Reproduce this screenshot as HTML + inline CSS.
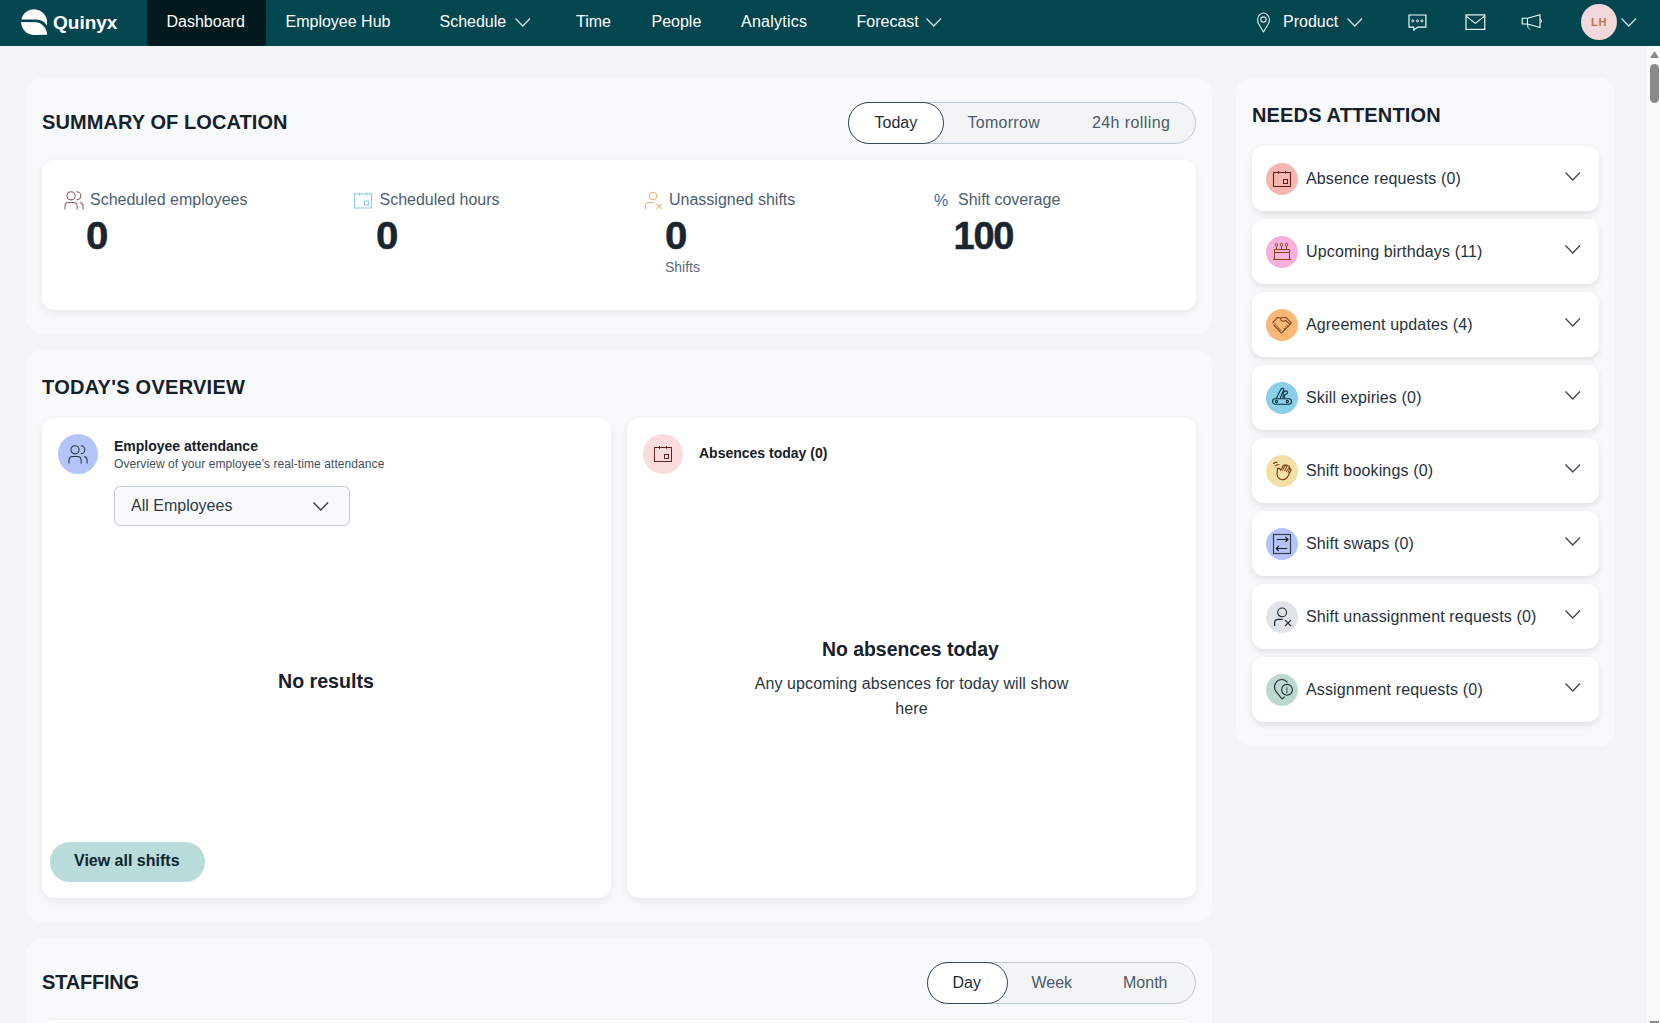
<!DOCTYPE html>
<html>
<head>
<meta charset="utf-8">
<style>
*{box-sizing:border-box;margin:0;padding:0}
html,body{width:1660px;height:1023px;overflow:hidden}
body{background:#f3f4f6;font-family:"Liberation Sans",sans-serif;position:relative;color:#1b2631}
.a{position:absolute;white-space:nowrap;line-height:1}
svg{position:absolute;overflow:visible}
#nav{position:absolute;left:0;top:0;width:1660px;height:46px;background:#024650}
#nav .t{color:#fff;font-size:16px;top:13.5px}
#tab{position:absolute;left:147px;top:0;width:119px;height:46px;background:#021a1e;border-radius:0 0 4px 4px}
.sec{position:absolute;background:#f8f9fb;border-radius:16px}
.card{position:absolute;background:#fff;border-radius:12px;box-shadow:0 3px 8px rgba(0,0,0,.07)}
.title{font-size:20px;font-weight:700;color:#17212b;letter-spacing:0}
.tog{position:absolute;height:42px;border:1px solid #bccad3;background:#f3f4f6;border-radius:21px}
.pill{position:absolute;height:42px;border:1px solid #34485a;background:#fff;border-radius:21px}
.tt{font-size:16px;color:#4a5b69}
.lbl{font-size:16px;color:#4d6070}
.num{font-size:38px;font-weight:700;color:#1a2530;-webkit-text-stroke:0.5px #1a2530}
.z{transform:scaleX(1.06);transform-origin:0 0}
.item{position:absolute;left:1252px;width:347px;height:65px;background:#fff;border-radius:12px;box-shadow:0 3px 7px rgba(0,0,0,.1)}
.item .c{position:absolute;left:14px;top:17px;width:32px;height:32px;border-radius:50%}
.item .l{position:absolute;left:54px;top:25px;font-size:16px;color:#27323d;white-space:nowrap;line-height:1;letter-spacing:0.15px}
.item svg.ch{left:313px;top:26px}
</style>
</head>
<body>
<!-- NAV -->
<div id="nav">
  <div id="tab"></div>
  <!-- logo -->
  <svg width="32" height="32" style="left:18px;top:6px" viewBox="0 0 32 32">
    <path d="M3.3 13.4 A13 13 0 1 1 28.8 19.4 C26.5 15.5 23 13.6 18 13.5 Z" fill="#fff"/>
    <path d="M3.1 16.1 L18 16.2 C23.5 16.4 28.7 21.5 29.2 28.8 L16.15 29 A13 13 0 0 1 3.1 16.1 Z" fill="#fff"/>
  </svg>
  <div class="a t" style="left:53px;top:13px;font-size:19px;font-weight:700">Quinyx</div>
  <div class="a t" style="left:166.5px">Dashboard</div>
  <div class="a t" style="left:285.5px">Employee Hub</div>
  <div class="a t" style="left:439.5px">Schedule</div>
  <svg width="16" height="9" style="left:515px;top:17.5px"><path d="M0.5 0.5 L7.75 8 L15 0.5" fill="none" stroke="#d8dfe2" stroke-width="1.3"/></svg>
  <div class="a t" style="left:576px">Time</div>
  <div class="a t" style="left:651.5px">People</div>
  <div class="a t" style="left:741px;letter-spacing:0.25px">Analytics</div>
  <div class="a t" style="left:856.5px">Forecast</div>
  <svg width="16" height="9" style="left:926px;top:17.5px"><path d="M0.5 0.5 L7.75 8 L15 0.5" fill="none" stroke="#d8dfe2" stroke-width="1.3"/></svg>
  <!-- right -->
  <svg width="16" height="21" style="left:1255.5px;top:11.5px" viewBox="0 0 16 21"><path d="M7.5 20 L2.6 11.8 C0.9 9 1.3 4.8 3.8 2.6 C6 0.7 9 0.7 11.2 2.6 C13.7 4.8 14.1 9 12.4 11.8 Z" fill="none" stroke="#e6ecee" stroke-width="1.1" stroke-linejoin="round"/><circle cx="7.5" cy="7.6" r="2.7" fill="none" stroke="#e6ecee" stroke-width="1.1"/></svg>
  <div class="a t" style="left:1283px">Product</div>
  <svg width="16" height="9" style="left:1347px;top:17.5px"><path d="M0.5 0.5 L7.75 8 L15 0.5" fill="none" stroke="#d8dfe2" stroke-width="1.3"/></svg>
  <svg width="20" height="17" style="left:1407.5px;top:13.5px" viewBox="0 0 20 17"><path d="M1 1 H17.9 V13.1 H9.6 L5.8 16.1 V13.1 H1 Z" fill="none" stroke="#fff" stroke-width="1.15" stroke-linejoin="miter"/><circle cx="4.8" cy="6.9" r="1.05" fill="none" stroke="#fff" stroke-width="0.9"/><circle cx="9.5" cy="6.9" r="1.05" fill="none" stroke="#fff" stroke-width="0.9"/><circle cx="13.9" cy="6.9" r="1.05" fill="none" stroke="#fff" stroke-width="0.9"/></svg>
  <svg width="22" height="17" style="left:1464.5px;top:13.5px" viewBox="0 0 22 17"><rect x="1" y="0.9" width="18.8" height="14.5" fill="none" stroke="#fff" stroke-width="1.15"/><path d="M1.2 2.1 L10.3 9.4 L19.6 2.1" fill="none" stroke="#fff" stroke-width="1.1"/></svg>
  <svg width="22" height="17" style="left:1521px;top:13.5px" viewBox="0 0 22 17"><path d="M1.2 4.2 H6.5 L19 0.8 V13.5 L6.5 10 H1.2 Z" fill="none" stroke="#fff" stroke-width="1.1" stroke-linejoin="round"/><path d="M6.5 4.2 V10" stroke="#fff" stroke-width="1"/><path d="M19 5 C21 5.5 21 8.5 19 9" fill="none" stroke="#fff" stroke-width="1"/><path d="M6.5 10 L7 13.5 L9 15.5" fill="none" stroke="#fff" stroke-width="1"/></svg>
  <div style="position:absolute;left:1581px;top:4px;width:36px;height:36px;border-radius:50%;background:#f3d8db"></div>
  <div class="a" style="left:1591px;top:16.5px;font-size:11px;font-weight:700;color:#b9794a;letter-spacing:0.7px">LH</div>
  <svg width="16" height="9" style="left:1621px;top:17.5px"><path d="M0.5 0.5 L7.75 8 L15 0.5" fill="none" stroke="#d8dfe2" stroke-width="1.3"/></svg>
</div>

<!-- scrollbar -->
<div style="position:absolute;left:1647px;top:46px;width:13px;height:977px;background:#fafafa"></div>
<svg width="10" height="8" style="left:1650px;top:51px"><path d="M0 7 L4.5 0 L9 7 Z" fill="#8a8a8a"/></svg>
<div style="position:absolute;left:1650px;top:64px;width:9px;height:39px;border-radius:5px;background:#8a8a8a"></div>
<div style="position:absolute;left:1650px;top:1021px;width:9px;height:2px;background:#8a8a8a"></div>

<!-- SECTION 1 -->
<div class="sec" style="left:26px;top:78px;width:1186px;height:256px"></div>
<div class="a title" style="left:42px;top:112px;letter-spacing:0.08px">SUMMARY OF LOCATION</div>
<div class="tog" style="left:848px;top:102px;width:348px"></div>
<div class="pill" style="left:848px;top:102px;width:96px"></div>
<div class="a tt" style="left:874.5px;top:115px;color:#1f2b36">Today</div>
<div class="a tt" style="left:967.5px;top:115px;letter-spacing:0.28px">Tomorrow</div>
<div class="a tt" style="left:1092px;top:115px;letter-spacing:0.4px">24h rolling</div>
<div class="card" style="left:42px;top:160px;width:1154px;height:150px"></div>
<!-- stat 1 -->
<svg width="22" height="20" style="left:63px;top:190.5px" viewBox="0 0 22 20"><circle cx="8" cy="4.75" r="4.1" fill="none" stroke="#8b5c5c" stroke-width="1.05"/><path d="M13.8 0.8 A4 3.95 0 0 1 13.8 8.7" fill="none" stroke="#8b5c5c" stroke-width="1.05"/><path d="M2 18.5 V15.2 C2 12.8 3.4 11.4 5.6 11.4 H10.5 C12.7 11.4 14.1 12.8 14.1 15.2 V18.5" fill="none" stroke="#8b5c5c" stroke-width="1.05"/><path d="M17.2 11.4 C19 11.8 20.1 13.2 20.1 15.2 V18.5" fill="none" stroke="#8b5c5c" stroke-width="1.05"/></svg>
<div class="a lbl" style="left:90px;top:191.8px">Scheduled employees</div>
<div class="a num z" style="left:86px;top:216.6px">0</div>
<!-- stat 2 -->
<svg width="20" height="18" style="left:353px;top:191.5px" viewBox="0 0 20 18"><rect x="1.5" y="1.9" width="17" height="14.1" fill="none" stroke="#87cbe5" stroke-width="1.05"/><path d="M6.45 0.4 V3.4 M13.5 0.4 V3.4" stroke="#87cbe5" stroke-width="1.05"/><rect x="11.5" y="9" width="4" height="4" fill="none" stroke="#87cbe5" stroke-width="1.05"/></svg>
<div class="a lbl" style="left:379.5px;top:191.8px">Scheduled hours</div>
<div class="a num z" style="left:375.5px;top:216.6px">0</div>
<!-- stat 3 -->
<svg width="20" height="20" style="left:644px;top:190.5px" viewBox="0 0 20 20"><circle cx="9" cy="4.95" r="3.8" fill="none" stroke="#f4b06a" stroke-width="1.05"/><path d="M1.5 18.1 V15.2 C1.5 12.9 3 11.5 5.2 11.5 H9.9" fill="none" stroke="#f4b06a" stroke-width="1.05"/><path d="M12.4 12.8 L17.7 18 M17.7 12.8 L12.4 18" stroke="#f4b06a" stroke-width="1.05"/></svg>
<div class="a lbl" style="left:669px;top:191.8px">Unassigned shifts</div>
<div class="a num z" style="left:665px;top:216.6px">0</div>
<div class="a" style="left:665px;top:260px;font-size:14px;color:#5a6c7c">Shifts</div>
<!-- stat 4 -->
<div class="a" style="left:934px;top:192.8px;font-size:16px;color:#3d6da6">%</div>
<div class="a lbl" style="left:958px;top:191.8px">Shift coverage</div>
<div class="a num" style="left:953.5px;top:216.6px;letter-spacing:-1.2px">100</div>


<!-- SECTION 2 -->
<div class="sec" style="left:26px;top:350px;width:1186px;height:572px"></div>
<div class="a title" style="left:42px;top:377px;letter-spacing:0.27px">TODAY'S OVERVIEW</div>
<div class="card" style="left:42px;top:418px;width:569px;height:480px"></div>
<div class="card" style="left:627px;top:418px;width:569px;height:480px"></div>
<!-- attendance card -->
<div style="position:absolute;left:58px;top:434px;width:40px;height:40px;border-radius:50%;background:#b5c4f8"></div>
<svg width="22" height="20" style="left:67.3px;top:445px" viewBox="0 0 22 20"><circle cx="8" cy="4.75" r="4.1" fill="none" stroke="#27323d" stroke-width="1.05"/><path d="M13.8 0.8 A4 3.95 0 0 1 13.8 8.7" fill="none" stroke="#27323d" stroke-width="1.05"/><path d="M2 18.5 V15.2 C2 12.8 3.4 11.4 5.6 11.4 H10.5 C12.7 11.4 14.1 12.8 14.1 15.2 V18.5" fill="none" stroke="#27323d" stroke-width="1.05"/><path d="M17.2 11.4 C19 11.8 20.1 13.2 20.1 15.2 V18.5" fill="none" stroke="#27323d" stroke-width="1.05"/></svg>
<div class="a" style="left:114px;top:438.5px;font-size:14px;font-weight:700;color:#17212b">Employee attendance</div>
<div class="a" style="left:114px;top:458px;font-size:12px;color:#3f4f5d;letter-spacing:0.08px">Overview of your employee’s real-time attendance</div>
<div style="position:absolute;left:114px;top:486px;width:236px;height:40px;border:1px solid #c3ced7;border-radius:6px;background:#f8f9fb"></div>
<div class="a" style="left:131px;top:497.6px;font-size:16px;color:#2f3b47">All Employees</div>
<svg width="16" height="9" style="left:313px;top:501.5px"><path d="M0.5 0.5 L7.75 8 L15 0.5" fill="none" stroke="#34414d" stroke-width="1.4"/></svg>
<div class="a" style="left:278px;top:671.5px;font-size:19.6px;font-weight:700;color:#17212b">No results</div>
<div style="position:absolute;left:50px;top:842px;width:155px;height:40px;border-radius:20px;background:#b9dcdb"></div>
<div class="a" style="left:74px;top:853.2px;font-size:16px;font-weight:700;color:#0f2530">View all shifts</div>
<!-- absences card -->
<div style="position:absolute;left:643px;top:434px;width:40px;height:40px;border-radius:50%;background:#fadcdc"></div>
<svg width="20" height="18" style="left:653px;top:445px" viewBox="0 0 20 18"><rect x="1.5" y="2.5" width="17" height="14" fill="none" stroke="#6b2222" stroke-width="1"/><path d="M6.5 1 V3.8 M13.5 1 V3.8" stroke="#6b2222" stroke-width="1"/><rect x="11.5" y="9.5" width="4" height="4" fill="none" stroke="#6b2222" stroke-width="1"/></svg>
<div class="a" style="left:699px;top:446.4px;font-size:14px;font-weight:700;color:#17212b">Absences today (0)</div>
<div class="a" style="left:822px;top:639.5px;font-size:19.4px;font-weight:700;color:#17212b">No absences today</div>
<div style="position:absolute;left:627px;top:672px;width:569px;text-align:center;font-size:16px;line-height:24.5px;letter-spacing:0.1px;color:#2a3540">Any upcoming absences for today will show<br>here</div>


<!-- SECTION 3 -->
<div class="sec" style="left:26px;top:938px;width:1186px;height:200px"></div>
<div class="a title" style="left:42px;top:971.8px;letter-spacing:-0.2px">STAFFING</div>
<div class="tog" style="left:927px;top:962px;width:269px"></div>
<div class="pill" style="left:927px;top:962px;width:81px"></div>
<div class="a tt" style="left:952.5px;top:975px;color:#1f2b36">Day</div>
<div class="a tt" style="left:1031.5px;top:975px">Week</div>
<div class="a tt" style="left:1123px;top:975px">Month</div>
<div class="card" style="left:42px;top:1020px;width:1154px;height:150px"></div>

<!-- PANEL -->
<div class="sec" style="left:1236px;top:78px;width:379px;height:668px"></div>
<div class="a title" style="left:1252px;top:105px;letter-spacing:0.14px">NEEDS ATTENTION</div>
<div class="item" style="top:146px"><div class="c" style="background:#f5b7b0"></div><svg width="22" height="22" style="left:20px;top:22px" viewBox="0 0 22 22"><rect x="1.5" y="4.5" width="17" height="14" fill="none" stroke="#661c1c" stroke-width="1.05"/><path d="M6.5 3 V5.5 M13.5 3 V5.5" stroke="#661c1c" stroke-width="1"/><rect x="11.5" y="11.5" width="4" height="4" fill="none" stroke="#661c1c" stroke-width="1"/></svg><div class="l">Absence requests (0)</div><svg class="ch" width="16" height="9"><path d="M0.5 0.5 L7.75 8 L15 0.5" fill="none" stroke="#3b4753" stroke-width="1.3"/></svg></div>
<div class="item" style="top:219px"><div class="c" style="background:#f8b1dd"></div><svg width="22" height="22" style="left:20px;top:22px" viewBox="0 0 22 22"><path d="M2.5 18.5 V8.5 H17.5 V18.5 M1 18.5 H19 M2.5 11.5 H17.5" fill="none" stroke="#8a4418" stroke-width="1"/><path d="M4.5 8 V5.5 M9.5 8 V5.5 M14.5 8 V5.5" stroke="#8a4418" stroke-width="1"/><ellipse cx="4.5" cy="3.8" rx="1.15" ry="1.6" fill="none" stroke="#8a4418" stroke-width="0.9"/><ellipse cx="9.5" cy="3.8" rx="1.15" ry="1.6" fill="none" stroke="#8a4418" stroke-width="0.9"/><ellipse cx="14.5" cy="3.8" rx="1.15" ry="1.6" fill="none" stroke="#8a4418" stroke-width="0.9"/></svg><div class="l">Upcoming birthdays (11)</div><svg class="ch" width="16" height="9"><path d="M0.5 0.5 L7.75 8 L15 0.5" fill="none" stroke="#3b4753" stroke-width="1.3"/></svg></div>
<div class="item" style="top:292px"><div class="c" style="background:#f7b878"></div><svg width="22" height="22" style="left:20px;top:22px" viewBox="0 0 22 22"><path d="M0.6 8.8 L5.2 3.6 L8.6 4 M11.9 3.4 H13.9 L19.4 8.8 L10 18.6 C9.6 19 9.2 19 8.8 18.6 L1.6 10.8" fill="none" stroke="#7e4216" stroke-width="1.05" stroke-linejoin="round"/><path d="M8.6 4 L11.9 3.4 M8.6 4 C8.4 5.6 9.3 7.2 11 7.2 C12 7.2 12.8 6.8 13.4 6.3 L18 10.4" fill="none" stroke="#7e4216" stroke-width="1.05"/><path d="M1.8 10.2 C2.6 9.6 3.6 9.8 3.9 10.7 M3.6 12.2 C4.4 11.6 5.4 11.8 5.7 12.7 M5.4 14.2 C6.2 13.6 7.2 13.8 7.5 14.7 M7.2 16.2 C8 15.6 9 15.8 9.3 16.7" fill="none" stroke="#7e4216" stroke-width="1"/><path d="M14.5 10.8 L16.3 12.6 M13.2 12.4 L14.8 14 M11.8 14 L13.2 15.5" stroke="#7e4216" stroke-width="1"/></svg><div class="l">Agreement updates (4)</div><svg class="ch" width="16" height="9"><path d="M0.5 0.5 L7.75 8 L15 0.5" fill="none" stroke="#3b4753" stroke-width="1.3"/></svg></div>
<div class="item" style="top:365px"><div class="c" style="background:#8ccfe8"></div><svg width="22" height="22" style="left:20px;top:22px" viewBox="0 0 22 22"><rect x="0.6" y="11.75" width="18.9" height="5.5" rx="2.75" fill="none" stroke="#0b3042" stroke-width="1.1"/><circle cx="4.5" cy="14.5" r="1.1" fill="none" stroke="#0b3042" stroke-width="1.1"/><circle cx="15.4" cy="14.5" r="1.1" fill="none" stroke="#0b3042" stroke-width="1.1"/><path d="M4.3 11.2 L8.8 2.4 C9.4 1.6 10.6 1.3 11.3 1.6 C11.8 1.9 11.9 2.5 11.7 3 L8.2 11.2" fill="none" stroke="#0b3042" stroke-width="1.1" stroke-linejoin="round"/><path d="M11.3 11.2 L11.1 8.4 C11 6.8 11.4 5.4 12.2 4.5 C13 3.7 14.5 3.6 15.2 4.3 C15.9 5 15.6 6.2 14.8 6.8 L13.1 7.7 C12.4 8.2 12.2 9 12.5 9.8 L12.9 11.2" fill="none" stroke="#0b3042" stroke-width="1.1" stroke-linejoin="round"/></svg><div class="l">Skill expiries (0)</div><svg class="ch" width="16" height="9"><path d="M0.5 0.5 L7.75 8 L15 0.5" fill="none" stroke="#3b4753" stroke-width="1.3"/></svg></div>
<div class="item" style="top:438px"><div class="c" style="background:#f2e0a6"></div><svg width="22" height="22" style="left:20px;top:22px" viewBox="0 0 22 22"><path d="M1.2 3.6 C2.2 2.6 3.6 2.2 5.4 2.4 M3.2 5.9 C4.1 5 5.5 4.6 7.4 4.8" fill="none" stroke="#7a3412" stroke-width="1.1"/><path d="M5.6 8.4 L7.4 8.2 L8.6 10.2 L11.4 5.6 C11.9 4.8 13 5 13.1 5.8 L13.6 5.2 C14.2 4.6 15.2 4.9 15.2 5.8 L15.9 5.9 C16.6 5.5 17.6 6 17.4 6.9 L17.9 8.6 C18.7 8.4 19.4 9.2 19 10.1 L16.4 15.6 C15 18.6 12.6 19.9 10 19.7 C7.1 19.4 5.1 17 5 13.6 Z" fill="none" stroke="#7a3412" stroke-width="1.1" stroke-linejoin="round"/><path d="M10.4 10.6 L13.1 5.8 M12.4 11.2 L15.2 5.8 M14.3 12 L17.4 6.9 M16 13 L17.9 8.6" fill="none" stroke="#7a3412" stroke-width="1"/></svg><div class="l">Shift bookings (0)</div><svg class="ch" width="16" height="9"><path d="M0.5 0.5 L7.75 8 L15 0.5" fill="none" stroke="#3b4753" stroke-width="1.3"/></svg></div>
<div class="item" style="top:511px"><div class="c" style="background:#b5c3f7"></div><svg width="22" height="22" style="left:20px;top:22px" viewBox="0 0 22 22"><rect x="1.5" y="1.5" width="17" height="19" fill="none" stroke="#353a47" stroke-width="1.15"/><path d="M4.7 6.5 H15.8 M13.4 4 L15.9 6.5 L13.4 9 M15.3 15.5 H4.3 M6.8 13 L4.3 15.5 L6.8 18" fill="none" stroke="#1b1f2b" stroke-width="1.15"/></svg><div class="l">Shift swaps (0)</div><svg class="ch" width="16" height="9"><path d="M0.5 0.5 L7.75 8 L15 0.5" fill="none" stroke="#3b4753" stroke-width="1.3"/></svg></div>
<div class="item" style="top:584px"><div class="c" style="background:#e0e4e9"></div><svg width="22" height="22" style="left:20px;top:22px" viewBox="0 0 22 22"><circle cx="10.1" cy="6.4" r="4.4" fill="none" stroke="#1e2a36" stroke-width="1.1"/><path d="M2.6 20 V16.8 C2.6 14.6 4 13.3 6.2 13.3 H10.8" fill="none" stroke="#1e2a36" stroke-width="1.25"/><path d="M13 14.1 L19 20 M19 14.1 L13 20" stroke="#1e2a36" stroke-width="1.1"/></svg><div class="l">Shift unassignment requests (0)</div><svg class="ch" width="16" height="9"><path d="M0.5 0.5 L7.75 8 L15 0.5" fill="none" stroke="#3b4753" stroke-width="1.3"/></svg></div>
<div class="item" style="top:657px"><div class="c" style="background:#bcd8cf"></div><svg width="22" height="22" style="left:20px;top:22px" viewBox="0 0 22 22"><path d="M15.4 3.3 C14 1.5 12.1 0.5 10 0.5 C5.8 0.5 2.5 3.8 2.5 8 C2.5 9.6 3 11 3.8 12.2 L10 20 L12.7 17.6" fill="none" stroke="#1c2a36" stroke-width="1.1" stroke-linejoin="round"/><circle cx="15" cy="10.8" r="5.4" fill="none" stroke="#1c2a36" stroke-width="1.1"/><path d="M14.8 8.2 V14.5" stroke="#5a6872" stroke-width="1.3"/></svg><div class="l">Assignment requests (0)</div><svg class="ch" width="16" height="9"><path d="M0.5 0.5 L7.75 8 L15 0.5" fill="none" stroke="#3b4753" stroke-width="1.3"/></svg></div>
</body>
</html>
